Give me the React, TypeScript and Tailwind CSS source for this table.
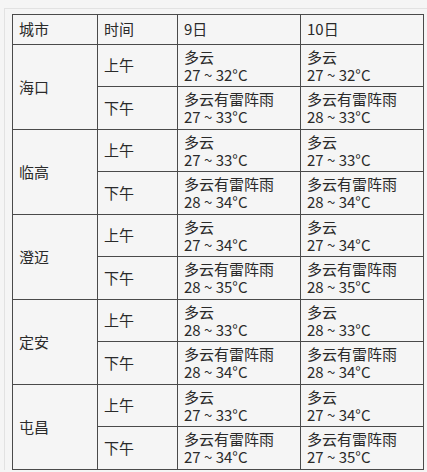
const rows = [
  {
    city: '海口',
    am: [['多云', '27 ~ 32°C'], ['多云', '27 ~ 32°C']],
    pm: [['多云有雷阵雨', '27 ~ 33°C'], ['多云有雷阵雨', '28 ~ 33°C']],
  },
  {
    city: '临高',
    am: [['多云', '27 ~ 33°C'], ['多云', '27 ~ 33°C']],
    pm: [['多云有雷阵雨', '28 ~ 34°C'], ['多云有雷阵雨', '28 ~ 34°C']],
  },
  {
    city: '澄迈',
    am: [['多云', '27 ~ 34°C'], ['多云', '27 ~ 34°C']],
    pm: [['多云有雷阵雨', '28 ~ 35°C'], ['多云有雷阵雨', '28 ~ 35°C']],
  },
  {
    city: '定安',
    am: [['多云', '28 ~ 33°C'], ['多云', '28 ~ 33°C']],
    pm: [['多云有雷阵雨', '28 ~ 34°C'], ['多云有雷阵雨', '28 ~ 34°C']],
  },
  {
    city: '屯昌',
    am: [['多云', '27 ~ 33°C'], ['多云', '27 ~ 34°C']],
    pm: [['多云有雷阵雨', '27 ~ 34°C'], ['多云有雷阵雨', '27 ~ 35°C']],
  },
]

const cell = 'border border-[#4a4a4a] px-[6px] align-middle text-left font-normal'

function Weather({ text }: { text: string[] }) {
  return (
    <td className={cell}>
      <div className="flex flex-col leading-[18px]">
        <span>{text[0]}</span>
        <span>{text[1]}</span>
      </div>
    </td>
  )
}

export default function App() {
  return (
    <div
      className="min-h-[472px] w-[427px] overflow-hidden bg-[#f5f5f5] text-[15px] text-[#2a2a2a]"
      style={{ fontFamily: '"Noto Sans CJK SC", "Noto Sans", sans-serif' }}
    >
      <div className="ml-[4px] mt-[8px] border-l border-t border-[#e2e2e2] pl-[7px] pt-[5px]">
        <table className="w-[411px] table-fixed border-collapse">
          <colgroup>
            <col className="w-[85px]" />
            <col className="w-[80px]" />
            <col className="w-[123px]" />
            <col className="w-[123px]" />
          </colgroup>
          <thead>
            <tr className="h-[30px]">
              <th className={cell}>城市</th>
              <th className={cell}>时间</th>
              <th className={cell}>9日</th>
              <th className={cell}>10日</th>
            </tr>
          </thead>
          <tbody>
            {rows.map((r) => (
              <>
                <tr key={r.city + 'am'} className="h-[42px]">
                  <td rowSpan={2} className={cell}>
                    {r.city}
                  </td>
                  <td className={cell}>上午</td>
                  <Weather text={r.am[0]} />
                  <Weather text={r.am[1]} />
                </tr>
                <tr key={r.city + 'pm'} className="h-[43px]">
                  <td className={cell}>下午</td>
                  <Weather text={r.pm[0]} />
                  <Weather text={r.pm[1]} />
                </tr>
              </>
            ))}
          </tbody>
        </table>
      </div>
    </div>
  )
}
